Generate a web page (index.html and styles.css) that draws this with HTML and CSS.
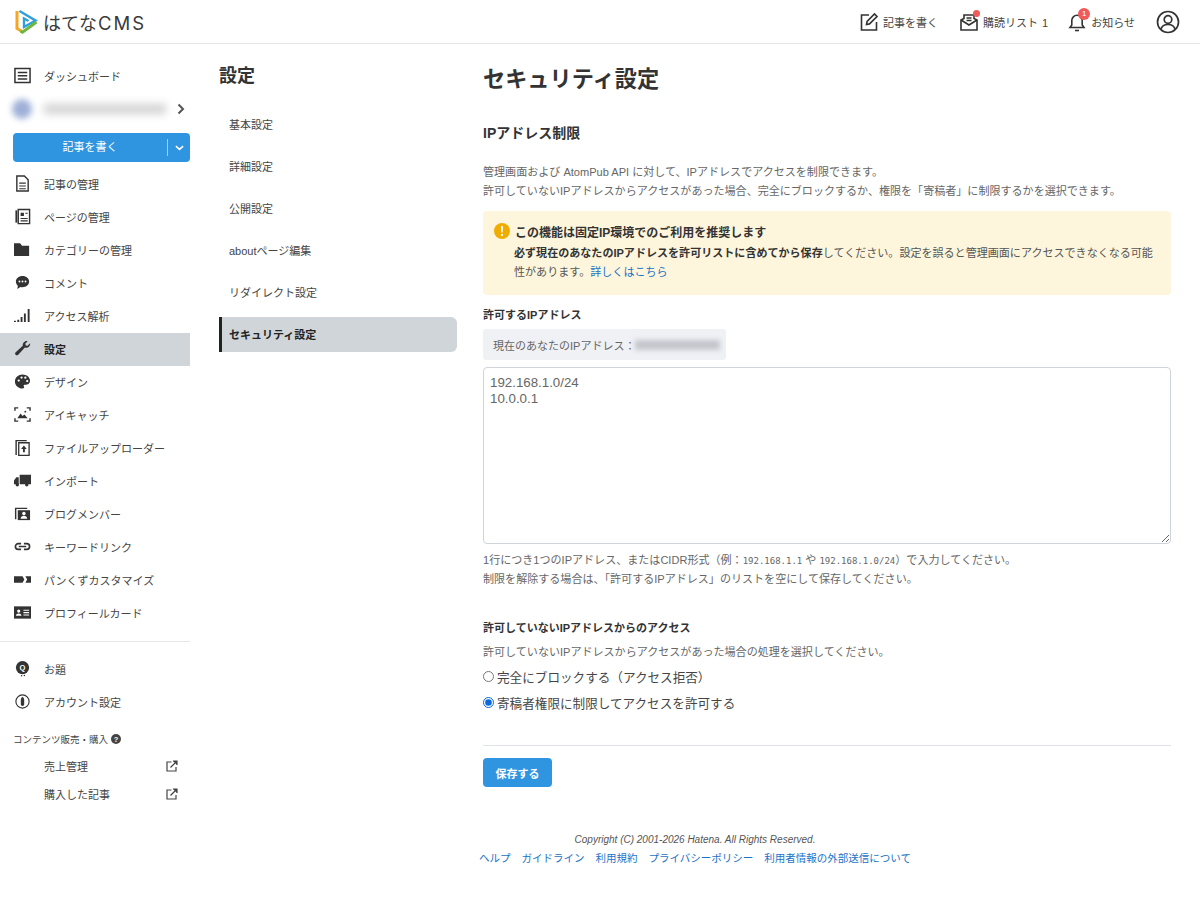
FILE: index.html
```html
<!DOCTYPE html>
<html lang="ja">
<head>
    <meta charset="UTF-8">
    <title>セキュリティ設定 - はてなCMS</title>
    <link rel="stylesheet" href="styles.css">
</head>
<body>
    <header class="topbar">
        <a class="logo" href="#">
            <svg class="logo-mark" viewBox="0 0 24 25" width="24" height="25" fill="none" stroke-width="3">
                <path d="M3 2V19.500L8 22.500" stroke="#f5a623"/>
                <path d="M5.500 2L21.500 11.500L10 18V9.500L14.500 12" stroke="#2f9fdc" stroke-width="2.400"/>
                <path d="M22.500 13L8.500 23.200L6.500 22" stroke="#6cb93f"/>
            </svg>
            <span class="logo-text">はてな<span class="logo-cms">CMS</span></span>
        </a>
        <nav class="topnav">
            <a class="topnav-item" href="#">
                <svg viewBox="0 0 20 20" width="20" height="20" fill="none" stroke="#333" stroke-width="1.600"><path d="M10 3H2.500v15h15V10"/><path d="M7.500 12.500l.6-3L15.500 2l2.500 2.500-7.500 7.400z"/></svg>
                記事を書く
            </a>
            <a class="topnav-item topnav-list" href="#">
                <span class="icon-wrap">
                    <svg viewBox="0 0 20 20" width="20" height="20" fill="none" stroke="#333" stroke-width="1.600"><path d="M2 8l3-1.500V3h10v3.500L18 8v10H2z"/><path d="M2 8l8 5 8-5"/><path d="M7.500 6h5M7.500 8.500h5"/></svg>
                    <i class="dot"></i>
                </span>
                <span>購読リスト<span class="list-count">1</span></span>
            </a>
            <a class="topnav-item" href="#">
                <span class="icon-wrap">
                    <svg viewBox="0 0 20 20" width="20" height="20" fill="none" stroke="#333" stroke-width="1.600"><path d="M3 15.500h14l-1.800-2.500V8.500a5.200 5.200 0 0 0-10.400 0V13z"/><path d="M8 18.500h4"/></svg>
                    <i class="count">1</i>
                </span>
                お知らせ
            </a>
            <a class="avatar" href="#">
                <svg viewBox="0 0 24 24" width="24" height="24" fill="none" stroke="#333" stroke-width="1.700"><circle cx="12" cy="12" r="10.500"/><circle cx="12" cy="9.500" r="3.800"/><path d="M5 19c1-3.500 4-4.500 7-4.500s6 1 7 4.500"/></svg>
            </a>
        </nav>
    </header>

    <div class="layout">
        <aside class="sidebar">
            <a class="side-item" href="#">
                <svg class="side-icon" viewBox="0 0 18 18"><path d="M1 1.500h16v15H1z" fill="none" stroke="#333" stroke-width="1.600"/><path d="M4 5h10v1.500H4zM4 8.500h10V10H4zM4 12h10v1.500H4z" fill="#333"/></svg>
                ダッシュボード
            </a>
            <div class="blog-row">
                <span class="blog-avatar"></span>
                <span class="blog-name"></span>
                <svg class="blog-arrow" viewBox="0 0 8 12" width="8" height="12"><path d="M1.500 1.500L6 6l-4.500 4.500" fill="none" stroke="#555" stroke-width="2"/></svg>
            </div>
            <a class="write-button" href="#">
                <span class="write-label">記事を書く</span>
                <span class="write-caret"><svg viewBox="0 0 10 6" width="9" height="6"><path d="M1 1l4 3.500L9 1" fill="none" stroke="#fff" stroke-width="1.800"/></svg></span>
            </a>

            <a class="side-item" href="#">
                <svg class="side-icon" viewBox="0 0 18 18"><path d="M3 1h8l4 4v12H3z" fill="none" stroke="#333" stroke-width="1.500"/><path d="M5.500 8h7v1.200h-7zM5.500 11h7v1.200h-7zM5.500 14h7v1h-7z" fill="#333"/></svg>
                記事の管理
            </a>
            <a class="side-item" href="#">
                <svg class="side-icon" viewBox="0 0 18 18"><path d="M1.500 2.500h2v13h-2z" fill="#333"/><path d="M4.500 1.500h12v15h-12z" fill="none" stroke="#333" stroke-width="1.500"/><path d="M7 5h3.500v3.500H7zM12 5h2.500v1H12zM7 10.500h7.500v1.200H7zM7 13h7.500v1.200H7z" fill="#333"/></svg>
                ページの管理
            </a>
            <a class="side-item" href="#">
                <svg class="side-icon" viewBox="0 0 18 18"><path d="M0 2.500h6.500l2 2.500H16v11H0z" fill="#333"/></svg>
                カテゴリーの管理
            </a>
            <a class="side-item" href="#">
                <svg class="side-icon" viewBox="0 0 18 18"><path d="M9 2c4.200 0 7 2.600 7 6s-2.800 6-7 6c-.8 0-1.500-.1-2.200-.3L3.500 16l.6-3.500C2.800 11.400 2 9.800 2 8c0-3.400 2.800-6 7-6z" fill="#333"/><circle cx="5.800" cy="8" r="1" fill="#fff"/><circle cx="9" cy="8" r="1" fill="#fff"/><circle cx="12.200" cy="8" r="1" fill="#fff"/></svg>
                コメント
            </a>
            <a class="side-item" href="#">
                <svg class="side-icon" viewBox="0 0 18 18"><path d="M0 14.500h2V16H0zM3.500 13.500h2V16h-2zM7 10.500h2V16H7zM10.500 7h2v9h-2zM14.500 2H16.500v14h-2z" fill="#333"/></svg>
                アクセス解析
            </a>
            <a class="side-item is-active" href="#">
                <svg class="side-icon" viewBox="0 0 18 18"><path d="M17 3.500c.5 2.200-1.200 4.800-4 4.800-.6 0-1.100-.1-1.500-.3L4.500 15.500c-.9.900-2.100.9-2.800.1s-.7-1.900.1-2.700L9.300 6C8.900 3.500 11.200.5 14.500 1.200l-2.500 2.600.4 2 2 .4z" fill="#333"/></svg>
                設定
            </a>
            <a class="side-item" href="#">
                <svg class="side-icon" viewBox="0 0 18 18"><path d="M9 1.500c4.400 0 8 3 8 6.800 0 2.800-2.300 4.200-4.500 4.200h-1.300c-1 0-1.400 1.200-.7 1.900.7.900.1 2.100-1.500 2.100-4.400 0-8-3.500-8-7.500 0-4.200 3.600-7.500 8-7.500z" fill="#333"/><circle cx="5" cy="8" r="1.200" fill="#fff"/><circle cx="8" cy="4.800" r="1.200" fill="#fff"/><circle cx="12" cy="5" r="1.200" fill="#fff"/><circle cx="14" cy="8.500" r="1.200" fill="#fff"/></svg>
                デザイン
            </a>
            <a class="side-item" href="#">
                <svg class="side-icon" viewBox="0 0 18 18"><path d="M1 5V2h3.500M13.500 2H17v3M17 13v3h-3.500M4.500 16H1v-3" fill="none" stroke="#333" stroke-width="1.500"/><path d="M3.500 13l3.500-5 2 2.500 2-1.500 3.500 4z" fill="#333"/><circle cx="12" cy="6" r="1" fill="#333"/></svg>
                アイキャッチ
            </a>
            <a class="side-item" href="#">
                <svg class="side-icon" viewBox="0 0 18 18"><path d="M1.500 1h12v1.500h-10.500V17H1.500z" fill="#333"/><path d="M5 4h11v13.500H5z" fill="none" stroke="#333" stroke-width="1.400"/><path d="M10.500 7l3 3.500h-2V14h-2v-3.500h-2z" fill="#333"/></svg>
                ファイルアップローダー
            </a>
            <a class="side-item" href="#">
                <svg class="side-icon" viewBox="0 0 18 18"><path d="M6 3h12v10H6zM0 9l2.500-3.500H5V13H0z" fill="#333"/><circle cx="3.500" cy="13.500" r="1.800" fill="#333"/><circle cx="13.500" cy="13.500" r="1.800" fill="#333"/></svg>
                インポート
            </a>
            <a class="side-item" href="#">
                <svg class="side-icon" viewBox="0 0 18 18"><path d="M1 3h13v1.200H2.500V15H1z" fill="#333"/><path d="M4 5.500h13V16H4z" fill="#333"/><circle cx="10.500" cy="9" r="1.800" fill="#fff"/><path d="M7 14.500c.3-2 1.800-3 3.500-3s3.200 1 3.500 3z" fill="#fff"/></svg>
                ブログメンバー
            </a>
            <a class="side-item" href="#">
                <svg class="side-icon" viewBox="0 0 18 18"><path d="M7.500 6H4.500a3 3 0 0 0 0 6h3M10.500 6h3a3 3 0 0 1 0 6h-3M5 9h8" fill="none" stroke="#333" stroke-width="1.800"/></svg>
                キーワードリンク
            </a>
            <a class="side-item" href="#">
                <svg class="side-icon" viewBox="0 0 18 18"><path d="M0 5.500h9l2 3.500-2 3.500H0zM12 5.500h6v7h-6l2-3.500z" fill="#333"/></svg>
                パンくずカスタマイズ
            </a>
            <a class="side-item" href="#">
                <svg class="side-icon" viewBox="0 0 18 18"><path d="M0 2.500h18v13H0z" fill="#333"/><circle cx="5" cy="7.500" r="1.700" fill="#fff"/><path d="M2 12.500c.2-1.800 1.500-2.500 3-2.500s2.800.7 3 2.500zM10 6h6v1.200h-6zM10 8.500h6v1.200h-6zM10 11h6v1.200h-6z" fill="#fff"/></svg>
                プロフィールカード
            </a>

            <div class="side-divider"></div>

            <a class="side-item" href="#">
                <svg class="side-icon" viewBox="0 0 18 18"><circle cx="9" cy="8" r="7" fill="#333"/><text x="9" y="11" font-size="8" font-weight="700" text-anchor="middle" fill="#fff" font-family="Liberation Sans, sans-serif">Q</text><circle cx="8" cy="16.700" r=".8" fill="#333"/><circle cx="11" cy="16.500" r=".8" fill="#333"/></svg>
                お題
            </a>
            <a class="side-item" href="#">
                <svg class="side-icon" viewBox="0 0 18 18"><circle cx="9" cy="9" r="7" fill="none" stroke="#333" stroke-width="1.200"/><path d="M9 4c1.300 1 1.800 2.200 1.800 3.500v4.500c0 1-.8 1.800-1.800 1.800s-1.800-.8-1.800-1.800V7.500C7.200 6.200 7.700 5 9 4z" fill="#333"/></svg>
                アカウント設定
            </a>

            <p class="side-caption">
                コンテンツ販売・購入
                <svg viewBox="0 0 12 12" width="10" height="10"><circle cx="6" cy="6" r="6" fill="#444"/><text x="6" y="9.200" font-size="9" font-weight="700" text-anchor="middle" fill="#fff" font-family="Liberation Sans, sans-serif">?</text></svg>
            </p>
            <a class="side-sub" href="#">
                売上管理
                <svg viewBox="0 0 12 12" width="12" height="12" fill="none" stroke="#444" stroke-width="1.200"><path d="M5.500 2H1v9h9V7"/><path d="M4.500 7.500L10.500 1.500"/><path d="M7 1h4v4" fill="#444"/></svg>
            </a>
            <a class="side-sub" href="#">
                購入した記事
                <svg viewBox="0 0 12 12" width="12" height="12" fill="none" stroke="#444" stroke-width="1.200"><path d="M5.500 2H1v9h9V7"/><path d="M4.500 7.500L10.500 1.500"/><path d="M7 1h4v4" fill="#444"/></svg>
            </a>
        </aside>

        <nav class="subnav">
            <h2 class="subnav-title">設定</h2>
            <a class="subnav-item" href="#">基本設定</a>
            <a class="subnav-item" href="#">詳細設定</a>
            <a class="subnav-item" href="#">公開設定</a>
            <a class="subnav-item" href="#">aboutページ編集</a>
            <a class="subnav-item" href="#">リダイレクト設定</a>
            <a class="subnav-item is-active" href="#">セキュリティ設定</a>
        </nav>

        <main class="content">
            <h1 class="page-title">セキュリティ設定</h1>
            <h2 class="section-title">IPアドレス制限</h2>
            <p class="note lead">管理画面および AtomPub API に対して、IPアドレスでアクセスを制限できます。<br>許可していないIPアドレスからアクセスがあった場合、完全にブロックするか、権限を「寄稿者」に制限するかを選択できます。</p>

            <div class="alert">
                <div class="alert-head">
                    <svg viewBox="0 0 16 16" width="16" height="16"><circle cx="8" cy="8" r="8" fill="#f0ad00"/><path d="M7 3h2l-.3 6.500H7.300z M7 11h2v2H7z" fill="#fff"/></svg>
                    この機能は固定IP環境でのご利用を推奨します
                </div>
                <div class="alert-body">
                    <p><strong>必ず現在のあなたのIPアドレスを許可リストに含めてから保存</strong>してください。設定を誤ると管理画面にアクセスできなくなる可能</p>
                    <p>性があります。<a href="#">詳しくはこちら</a></p>
                </div>
            </div>

            <label class="field-label" for="ips">許可するIPアドレス</label>
            <div class="current-ip">現在のあなたのIPアドレス：<span class="blurred-ip"></span></div>
            <textarea class="ip-list" id="ips">192.168.1.0/24
10.0.0.1</textarea>
            <p class="note help">1行につき1つのIPアドレス、またはCIDR形式（例：<code>192.168.1.1</code> や <code>192.168.1.0/24</code>）で入力してください。<br>制限を解除する場合は、「許可するIPアドレス」のリストを空にして保存してください。</p>

            <h3 class="field-label deny-title">許可していないIPアドレスからのアクセス</h3>
            <p class="note deny-note">許可していないIPアドレスからアクセスがあった場合の処理を選択してください。</p>
            <label class="radio"><input type="radio" name="deny">完全にブロックする（アクセス拒否）</label>
            <label class="radio"><input type="radio" name="deny" checked>寄稿者権限に制限してアクセスを許可する</label>

            <div class="actions">
                <button class="save-button" type="button">保存する</button>
            </div>

            <footer class="footer">
                <p class="copyright">Copyright (C) 2001-2026 Hatena. All Rights Reserved.</p>
                <div class="footer-links">
                    <a href="#">ヘルプ</a>
                    <a href="#">ガイドライン</a>
                    <a href="#">利用規約</a>
                    <a href="#">プライバシーポリシー</a>
                    <a href="#">利用者情報の外部送信について</a>
                </div>
            </footer>
        </main>
    </div>
</body>
</html>
```

FILE: styles.css
```css
* {
    margin: 0;
    padding: 0;
    box-sizing: border-box;
}

body {
    background-color: #fff;
    color: #333;
    font-family: "Liberation Sans", "Noto Sans CJK JP", sans-serif;
    font-size: 11px;
}

a {
    color: inherit;
    text-decoration: none;
}

/* Header */
.topbar {
    display: flex;
    align-items: center;
    justify-content: space-between;
    height: 44px;
    padding: 0 20px 0 14px;
    border-bottom: 1px solid #e6e6e6;
}

.logo {
    display: flex;
    align-items: center;
    gap: 5px;
}

.logo-text {
    font-family: "Noto Sans CJK JP", sans-serif;
    font-size: 18px;
    color: #3a3a3a;
}

.logo-cms {
    margin-left: 1px;
    font-family: Inter, sans-serif;
    font-size: 18.500px;
    letter-spacing: 2px;
}

.topnav {
    display: flex;
    align-items: center;
}

.topnav-item {
    display: flex;
    align-items: center;
    gap: 4px;
    margin-right: 21px;
    color: #444;
    font-size: 11px;
}

.topnav-list {
    margin-right: 19px;
}

.list-count {
    margin-left: 4px;
}

.icon-wrap {
    position: relative;
    display: flex;
}

.dot {
    position: absolute;
    top: -2px;
    right: -1px;
    width: 7px;
    height: 7px;
    border-radius: 50%;
    background-color: #f15a5a;
}

.count {
    position: absolute;
    top: -4px;
    right: -3px;
    width: 12px;
    height: 12px;
    border-radius: 50%;
    background-color: #f15a5a;
    color: #fff;
    font-size: 8px;
    font-style: normal;
    line-height: 12px;
    text-align: center;
}

.avatar {
    display: flex;
}

/* Layout */
.layout {
    display: flex;
    align-items: flex-start;
}

/* Sidebar */
.sidebar {
    flex: none;
    width: 190px;
    padding-top: 16px;
}

.side-item {
    display: flex;
    align-items: center;
    gap: 13px;
    height: 33px;
    padding: 0 0 2px 14px;
    color: #444;
}

.side-item.is-active {
    background-color: #d0d5d9;
    color: #222;
    font-weight: 700;
}

.side-icon {
    flex: none;
    width: 17px;
    height: 17px;
}

.blog-row {
    display: flex;
    align-items: center;
    height: 33px;
    padding: 0 0 2px 12px;
}

.blog-avatar {
    width: 20px;
    height: 20px;
    border-radius: 50%;
    background-color: #9fb0d8;
    filter: blur(3px);
}

.blog-name {
    width: 122px;
    height: 10px;
    margin-left: 12px;
    background-color: #d2d2d2;
    filter: blur(4px);
}

.blog-arrow {
    margin-left: 11px;
}

.write-button {
    display: flex;
    align-items: center;
    height: 29px;
    margin: 7px 0 6px 13px;
    background-color: #2f95e0;
    border-radius: 4px;
    color: #fff;
}

.write-label {
    flex: 1;
    padding-bottom: 3px;
    text-align: center;
}

.write-caret {
    display: flex;
    align-items: center;
    justify-content: center;
    width: 23px;
    height: 17px;
    border-left: 1px solid #a5d0f0;
}

.side-divider {
    height: 1px;
    margin: 11px 0;
    background-color: #e6e6e6;
}

.side-caption {
    display: flex;
    align-items: center;
    gap: 3px;
    height: 18px;
    margin: 11px 0 4px 13px;
    font-size: 9.500px;
    color: #444;
}

.side-sub {
    display: flex;
    align-items: center;
    justify-content: space-between;
    height: 28px;
    padding: 0 12px 0 44px;
    color: #444;
}

/* Sub navigation */
.subnav {
    flex: none;
    width: 238px;
    margin-left: 29px;
    padding-top: 21px;
}

.subnav-title {
    height: 40px;
    margin-bottom: 2px;
    font-size: 18px;
    line-height: 22px;
    color: #333;
}

.subnav-item {
    display: flex;
    align-items: center;
    height: 35px;
    margin-bottom: 7px;
    padding: 0 0 2px 10px;
    color: #444;
}

.subnav-item.is-active {
    padding-left: 7px;
    background-color: #d0d5d9;
    border-left: 3px solid #222;
    border-radius: 0 6px 6px 0;
    color: #222;
    font-weight: 700;
}

/* Main content */
.content {
    flex: none;
    width: 688px;
    margin-left: 26px;
    padding-top: 22px;
}

.page-title {
    font-size: 22.200px;
    line-height: 28px;
    color: #333;
}

.section-title {
    margin-top: 28px;
    font-size: 14px;
    line-height: 22px;
    color: #333;
}

.note {
    font-size: 11.050px;
    line-height: 19px;
    color: #666;
}

.note code {
    font-family: "DejaVu Sans Mono", monospace;
    font-size: 9px;
}

.lead {
    margin-top: 19px;
}

.alert {
    height: 84px;
    margin-top: 10px;
    padding: 8px 12px 0 11px;
    background-color: #fdf6dc;
    border-radius: 4px;
}

.alert-head {
    display: flex;
    align-items: center;
    gap: 5px;
    height: 24px;
    font-size: 12px;
    font-weight: 700;
    color: #333;
}

.alert-body {
    margin-top: 1px;
    padding-left: 20px;
    font-size: 11.050px;
    line-height: 19px;
    color: #555;
}

.alert-body strong {
    color: #333;
}

.alert-body a {
    color: #1a73c8;
}

.field-label {
    display: block;
    font-size: 11px;
    font-weight: 700;
    line-height: 16px;
    color: #333;
}

.alert + .field-label {
    margin-top: 12px;
}

.current-ip {
    display: flex;
    align-items: center;
    width: 243px;
    height: 31px;
    margin-top: 6px;
    padding-left: 10px;
    background-color: #eff1f5;
    border-radius: 3px;
    font-size: 11px;
    color: #666;
}

.blurred-ip {
    width: 85px;
    height: 10px;
    background-color: #c4c6cc;
    filter: blur(2.500px);
}

.ip-list {
    display: block;
    width: 100%;
    height: 177px;
    margin-top: 7px;
    padding: 7px 6px;
    border: 1px solid #cfd3da;
    border-radius: 4px;
    font-family: "Liberation Sans", sans-serif;
    font-size: 13.300px;
    line-height: 16px;
    color: #666;
}

.help {
    margin-top: 7px;
    line-height: 18px;
}

.deny-title {
    margin-top: 32px;
}

.deny-note {
    margin-top: 7px;
}

.radio {
    display: flex;
    align-items: center;
    gap: 3px;
    height: 26px;
    font-size: 12.600px;
    color: #444;
}

.radio input {
    width: 11px;
    height: 11px;
    margin: 0;
    accent-color: #0b69e0;
}

.deny-note + .radio {
    margin-top: 1px;
}

.actions {
    margin-top: 30px;
    padding-top: 12px;
    border-top: 1px solid #dfe2e8;
}

.save-button {
    display: block;
    width: 69px;
    height: 29px;
    background-color: #2f95e0;
    border: none;
    border-radius: 4px;
    color: #fff;
    font-family: inherit;
    font-size: 11px;
    font-weight: 700;
}

/* Footer */
.footer {
    width: 432px;
    margin-top: 46px;
    margin-left: -4px;
    text-align: center;
}

.copyright {
    font-size: 10px;
    font-style: italic;
    line-height: 14px;
    color: #555;
}

.footer-links {
    display: flex;
    justify-content: space-between;
    margin-top: 3px;
    font-size: 10.500px;
    line-height: 16px;
}

.footer-links a {
    color: #1a73c8;
}
```
